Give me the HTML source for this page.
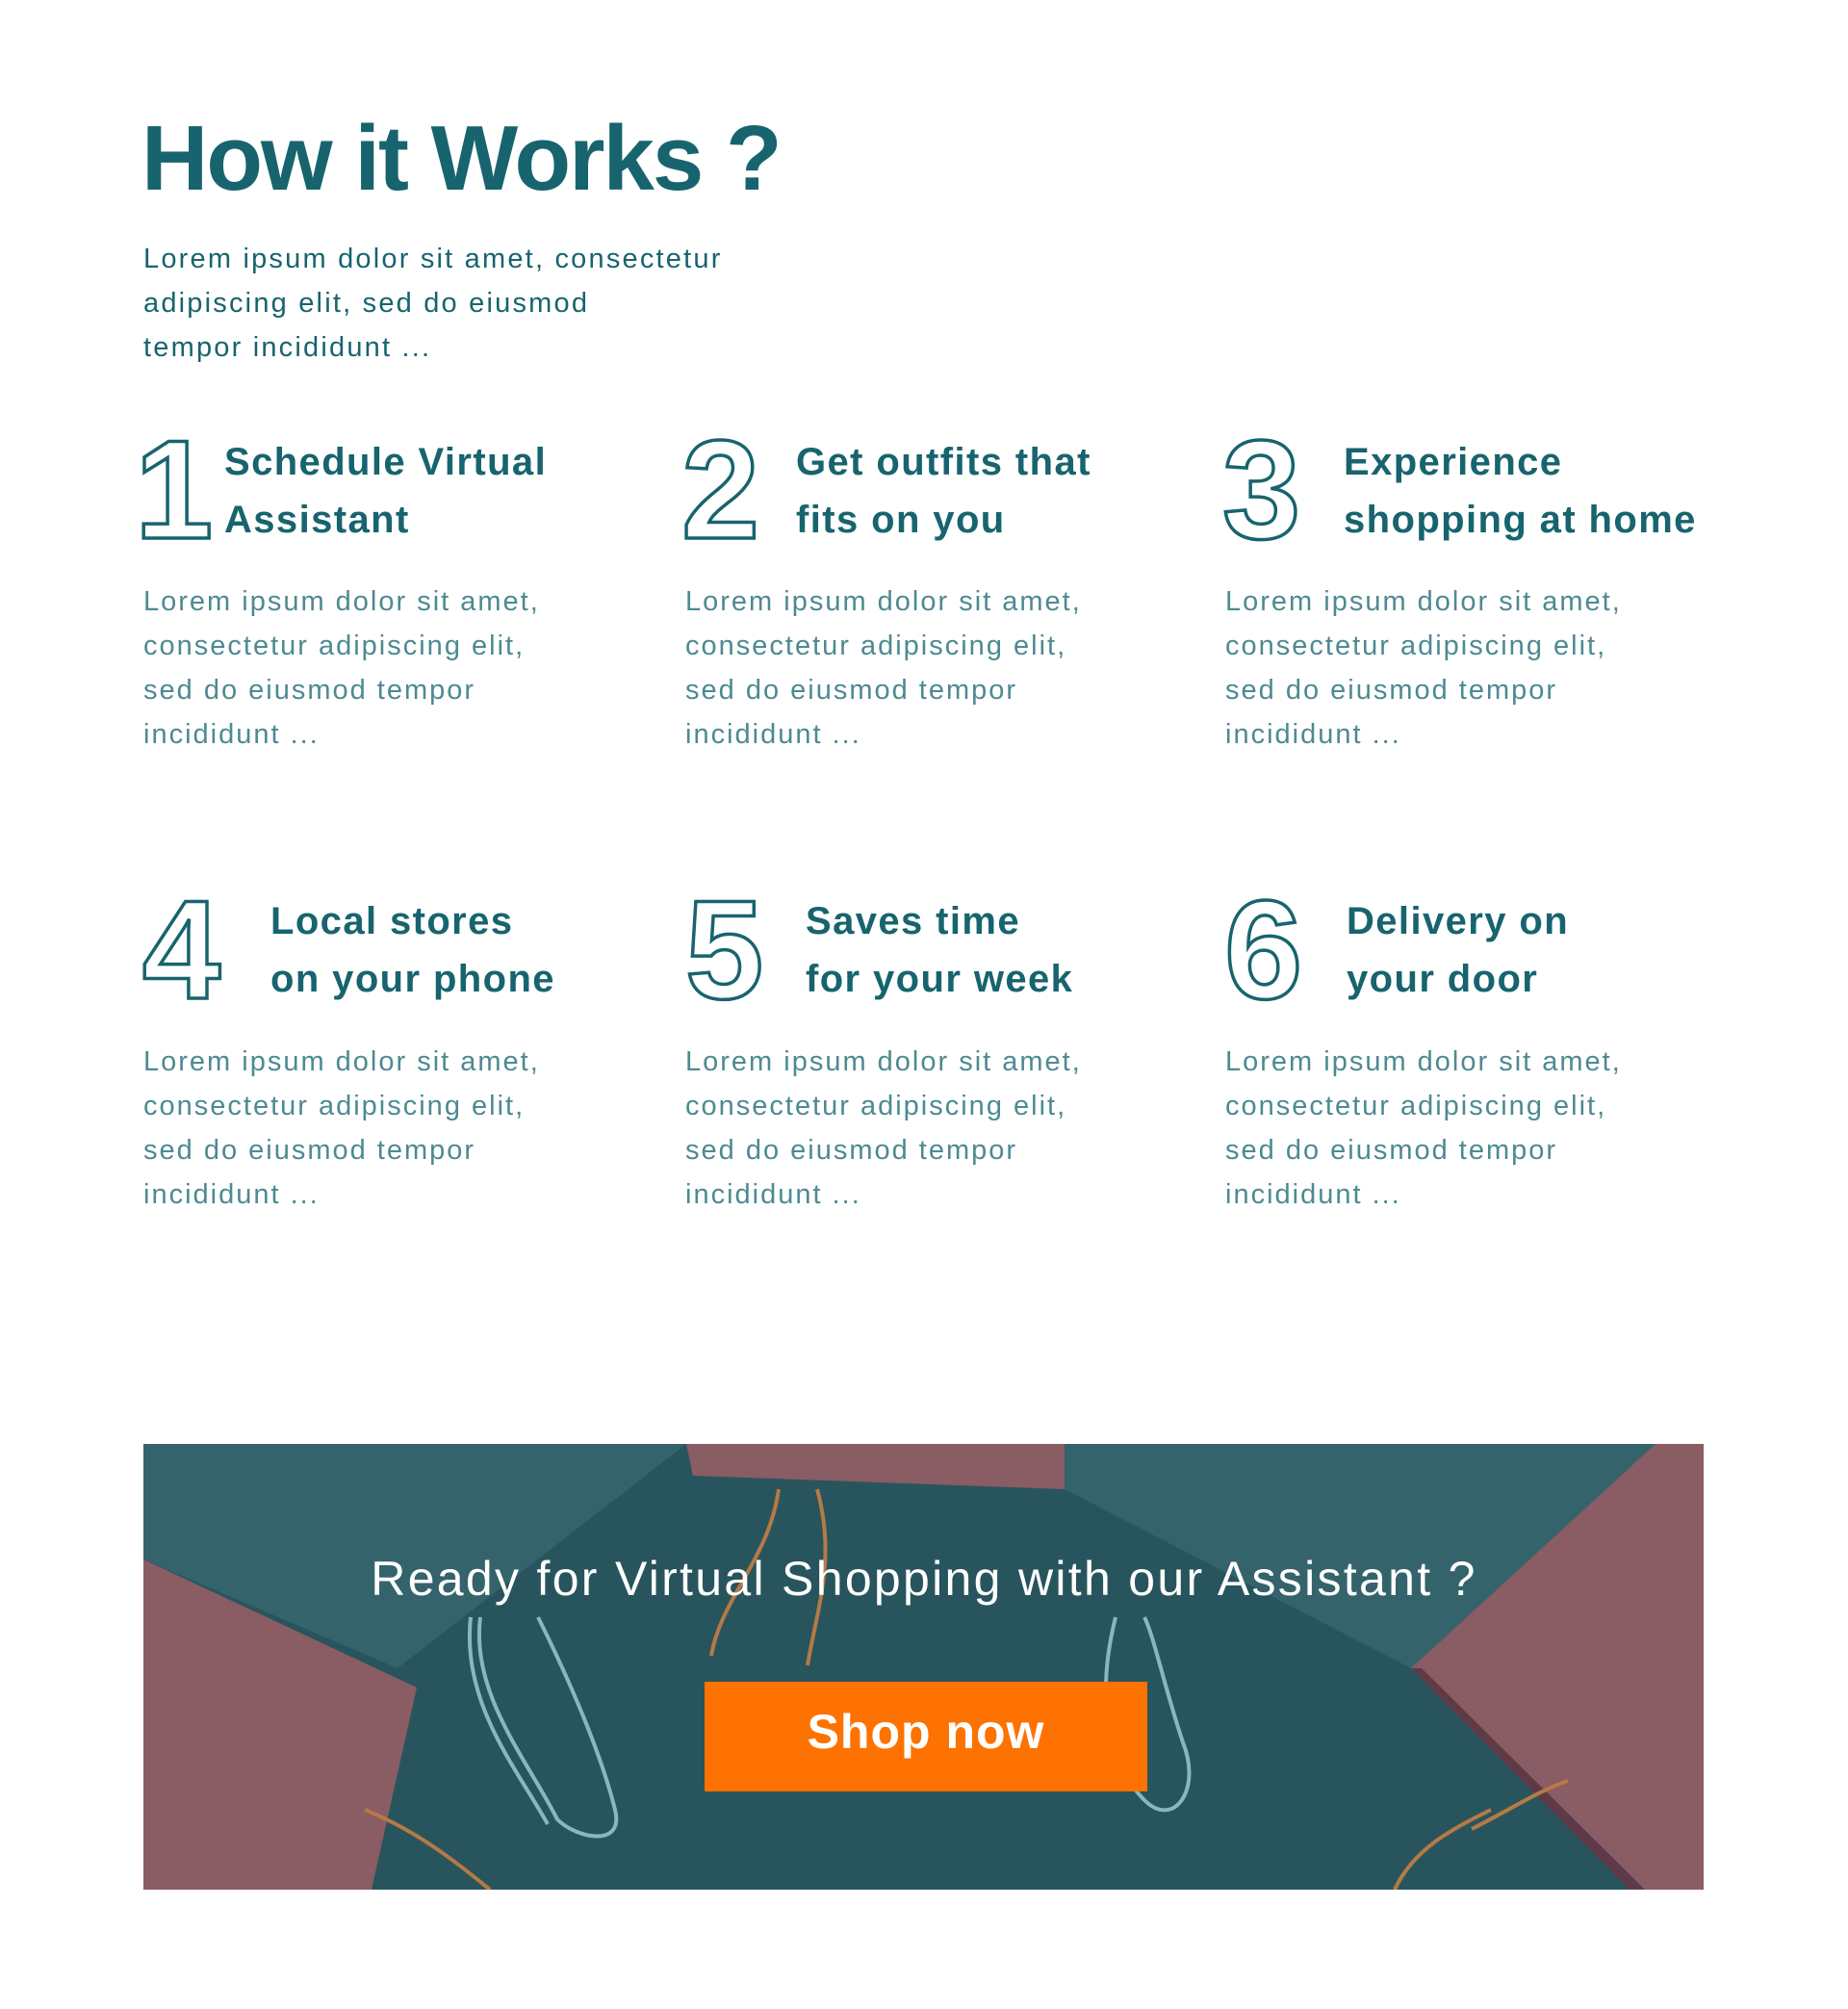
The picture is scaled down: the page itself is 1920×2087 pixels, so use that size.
<!DOCTYPE html>
<html><head><meta charset="utf-8"><style>
*{margin:0;padding:0;box-sizing:border-box}
html,body{width:1920px;height:2087px;background:#fff;overflow:hidden;font-family:"Liberation Sans",sans-serif}
.a{position:absolute;white-space:nowrap}
h1{position:absolute;left:147px;top:100px;font-size:96px;font-weight:bold;color:#17646e;letter-spacing:-2px;line-height:130px;white-space:nowrap}
.intro{position:absolute;left:149px;top:246px;font-size:29px;line-height:46px;color:#17646e;letter-spacing:2.2px;white-space:nowrap}
.num{position:absolute;font-size:146px;line-height:146px;font-weight:bold;color:transparent;-webkit-text-stroke:3.5px #17646e}
.hd{position:absolute;font-size:40px;font-weight:bold;color:#17646e;line-height:60px;white-space:nowrap;letter-spacing:1.4px}
.bd{position:absolute;font-size:29px;line-height:46px;color:#4d8a92;white-space:nowrap;letter-spacing:2px}
.ban{position:absolute;left:149px;top:1500px;width:1622px;height:463px;overflow:hidden;background:#2a5860}
.ban svg{position:absolute;left:0;top:0}
.bt{position:absolute;left:0;width:1622px;top:110px;text-align:center;color:#fff;font-size:50px;line-height:60px;letter-spacing:2.3px}
.btn{position:absolute;left:583px;top:247px;width:460px;height:114px;background:#fd7200;color:#fff;font-weight:bold;font-size:50px;line-height:104px;text-align:center;letter-spacing:1px}
</style></head><body>
<h1>How it Works ?</h1>
<div class="intro">Lorem ipsum dolor sit amet, consectetur<br>adipiscing elit, sed do eiusmod<br>tempor incididunt ...</div>

<div class="num a" style="left:140px;top:436px">1</div>
<div class="hd" style="left:233px;top:450px">Schedule Virtual<br>Assistant</div>
<div class="bd" style="left:149px;top:602px">Lorem ipsum dolor sit amet,<br>consectetur adipiscing elit,<br>sed do eiusmod tempor<br>incididunt ...</div>

<div class="num a" style="left:708px;top:436px">2</div>
<div class="hd" style="left:827px;top:450px">Get outfits that<br>fits on you</div>
<div class="bd" style="left:712px;top:602px">Lorem ipsum dolor sit amet,<br>consectetur adipiscing elit,<br>sed do eiusmod tempor<br>incididunt ...</div>

<div class="num a" style="left:1270px;top:436px">3</div>
<div class="hd" style="left:1396px;top:450px">Experience<br>shopping at home</div>
<div class="bd" style="left:1273px;top:602px">Lorem ipsum dolor sit amet,<br>consectetur adipiscing elit,<br>sed do eiusmod tempor<br>incididunt ...</div>

<div class="num a" style="left:148px;top:914px">4</div>
<div class="hd" style="left:281px;top:927px">Local stores<br>on your phone</div>
<div class="bd" style="left:149px;top:1080px">Lorem ipsum dolor sit amet,<br>consectetur adipiscing elit,<br>sed do eiusmod tempor<br>incididunt ...</div>

<div class="num a" style="left:712px;top:914px">5</div>
<div class="hd" style="left:837px;top:927px">Saves time<br>for your week</div>
<div class="bd" style="left:712px;top:1080px">Lorem ipsum dolor sit amet,<br>consectetur adipiscing elit,<br>sed do eiusmod tempor<br>incididunt ...</div>

<div class="num a" style="left:1272px;top:914px">6</div>
<div class="hd" style="left:1399px;top:927px">Delivery on<br>your door</div>
<div class="bd" style="left:1273px;top:1080px">Lorem ipsum dolor sit amet,<br>consectetur adipiscing elit,<br>sed do eiusmod tempor<br>incididunt ...</div>

<div class="ban" style="width:1621px">
<svg width="1622" height="463" viewBox="0 0 1622 463">
<rect width="1622" height="463" fill="#28555d"/>
<polygon points="71,0 564,0 264,233 0,120 0,0" fill="#35636b"/>
<polygon points="957,0 1571,0 1317,233 957,47" fill="#35636b"/>
<polygon points="564,0 957,0 957,47 571,33" fill="#8a5c63"/>
<polygon points="0,120 284,253 237,463 0,463" fill="#8a5c63"/>
<polygon points="1571,0 1622,0 1622,463 1544,463 1317,233" fill="#8a5c63"/>
<polygon points="1544,463 1317,233 1328,233 1560,463" fill="#5e3a48"/>
<g fill="none" stroke="#8ab7bf" stroke-width="4">
<path d="M350,180 C340,260 400,330 430,390 C450,410 500,420 490,380 C470,300 420,200 410,180"/>
<path d="M340,180 C330,270 390,340 420,395"/>
<path d="M1010,180 C990,260 1000,330 1040,370 C1070,400 1100,360 1080,310 C1060,250 1050,200 1040,180"/>
</g>
<g fill="none" stroke="#b57a45" stroke-width="4">
<path d="M660,47 C650,120 600,160 590,220"/>
<path d="M700,47 C720,120 700,170 690,230"/>
<path d="M230,380 C280,400 320,430 360,463"/>
<path d="M1380,400 C1420,380 1450,360 1480,350"/>
<path d="M1300,463 C1320,420 1360,400 1400,380"/>
</g>
</svg>
<div class="bt">Ready for Virtual Shopping with our Assistant ?</div>
<div class="btn">Shop now</div>
</div>
</body></html>
